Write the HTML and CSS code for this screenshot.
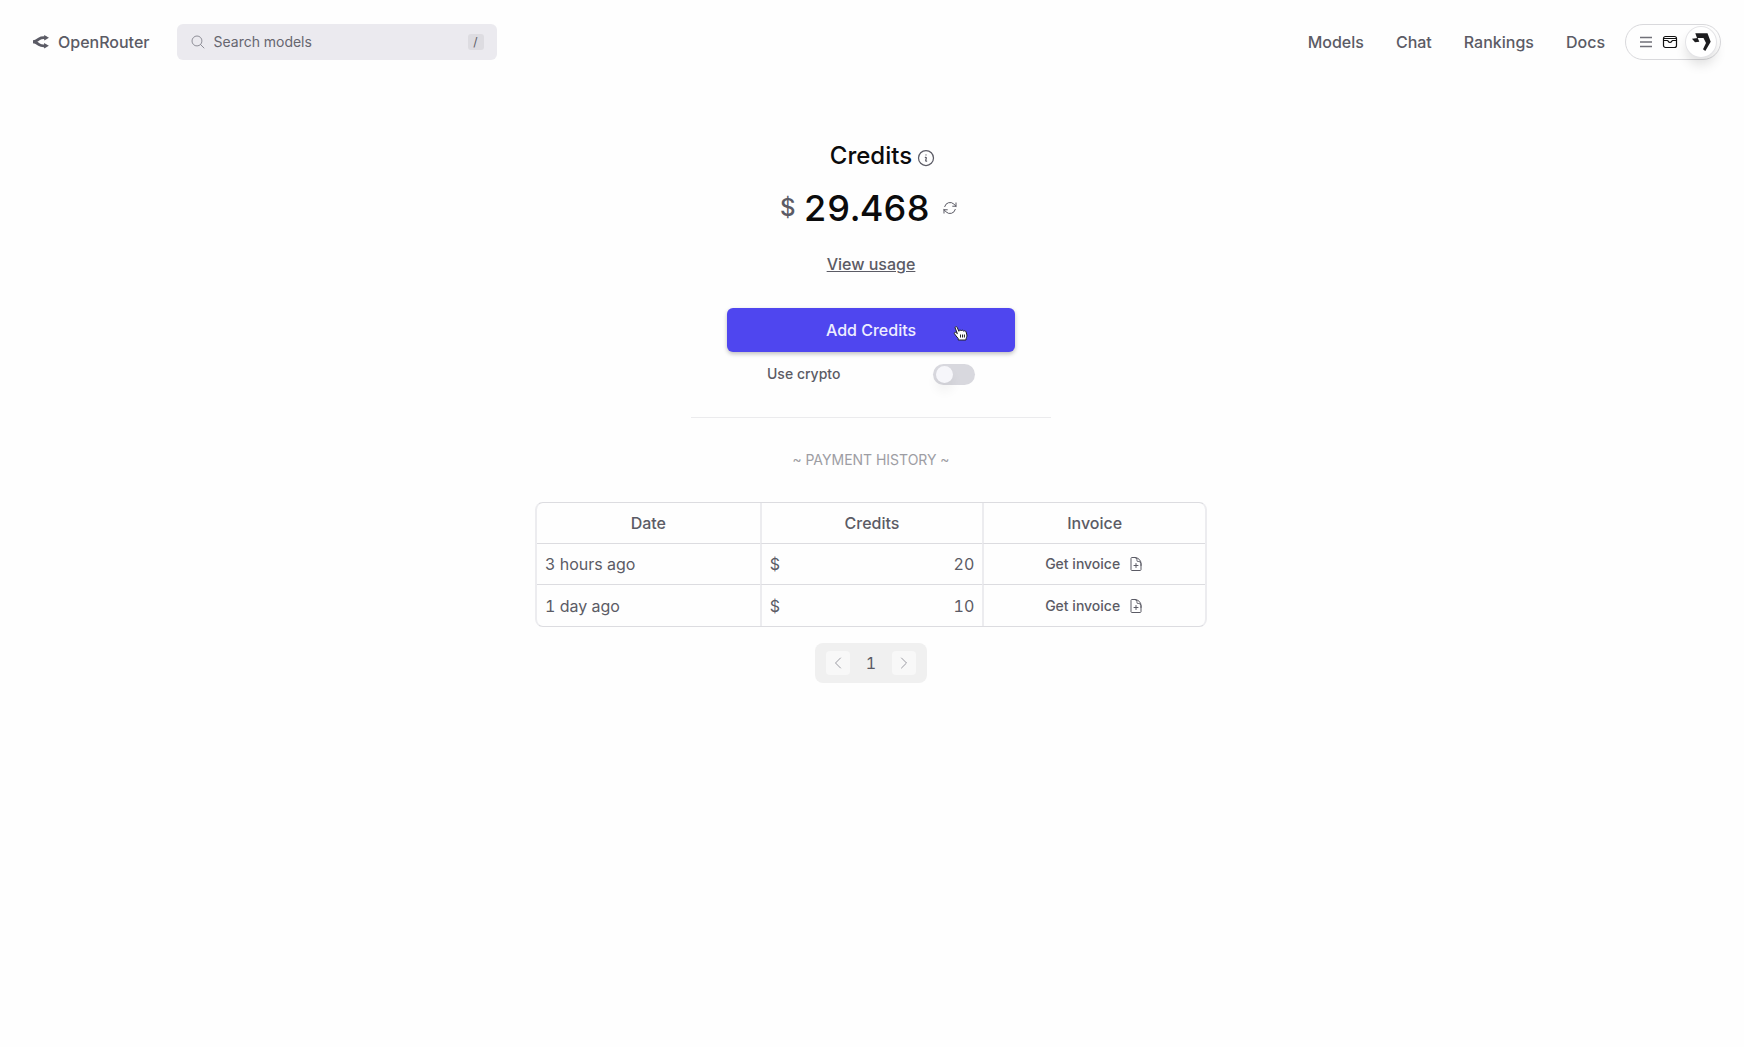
FILE: index.html
```html
<!DOCTYPE html>
<html lang="en">
<head>
<meta charset="utf-8">
<meta name="viewport" content="width=device-width, initial-scale=1">
<title>Credits | OpenRouter</title>
<link rel="stylesheet" href="styles.css">
</head>
<body>
<svg class="sprite" aria-hidden="true">
  <symbol id="doc-plus" viewBox="0 0 24 24"><path d="M19.5 14.25v-2.625a3.375 3.375 0 0 0-3.375-3.375h-1.5A1.125 1.125 0 0 1 13.5 7.125v-1.5a3.375 3.375 0 0 0-3.375-3.375H8.25m3.75 9v6m3-3H9m1.5-12H5.625c-.621 0-1.125.504-1.125 1.125v17.25c0 .621.504 1.125 1.125 1.125h12.75c.621 0 1.125-.504 1.125-1.125V11.25a9 9 0 0 0-9-9Z"/></symbol>
</svg>
<header class="topbar">
  <a class="brand" href="#">
    <svg class="brand-mark" viewBox="0 0 512 512" aria-hidden="true"><path class="line" d="M3 248.945C18 248.945 76 236 106 219C136 202 136 202 198 158C276.497 102.293 332 120.945 423 120.945"/><path d="M511 121.5L357.25 210.268V32.732Z"/><path class="line" d="M0 249C15 249 73 261.945 103 278.945C133 295.945 133 295.945 195 339.945C273.497 395.652 329 377 420 377"/><path d="M508 376.445L354.25 287.678V465.213Z"/></svg>
    OpenRouter
  </a>
  <div class="search">
    <svg class="icon" viewBox="0 0 24 24" aria-hidden="true"><path d="m21 21-5.197-5.197m0 0A7.5 7.5 0 1 0 5.196 5.196a7.5 7.5 0 0 0 10.607 10.607Z"/></svg>
    <input type="text" placeholder="Search models" aria-label="Search models">
    <kbd>/</kbd>
  </div>
  <nav class="nav">
    <a href="#">Models</a>
    <a href="#">Chat</a>
    <a href="#">Rankings</a>
    <a href="#">Docs</a>
  </nav>
  <button class="account" type="button" aria-label="Account menu">
    <svg class="menu-icon" viewBox="0 0 16 16" aria-hidden="true"><path d="M2 3.500h12M2 8h12M2 12.500h12"/></svg>
    <svg class="inbox-icon" viewBox="0 0 16 16" aria-hidden="true"><rect x="1.500" y="2.500" width="13" height="11" rx="2"/><path d="M1.500 4.500h13M1.500 6.500h4c.6 0 .8 2 2.500 2s1.900-2 2.500-2h4"/></svg>
    <span class="avatar"><svg viewBox="0 0 20 20" aria-hidden="true"><path d="M4.300 1.300H16.500L19.700 9.700 14.300 19 12 17.300 15 11 12.500 6H6Z"/><path d="M1 6.700 6.700 6 8.300 9.700 4 10.300Z"/></svg></span>
  </button>
</header>
<main class="page">
  <h1 class="title">Credits
    <svg class="icon" viewBox="0 0 24 24" aria-hidden="true"><path d="m11.250 11.250.041-.02a.75.75 0 0 1 1.063.852l-.708 2.836a.75.75 0 0 0 1.063.853l.041-.021M21 12a9 9 0 1 1-18 0 9 9 0 0 1 18 0Zm-9-3.750h.008v.008H12V8.250Z"/></svg>
  </h1>
  <div class="balance">
    <span class="currency">$</span>
    <span class="amount">29.468</span>
    <button class="refresh" type="button" aria-label="Refresh balance"><svg class="icon" viewBox="0 0 24 24" aria-hidden="true"><path d="M16.023 9.348h4.992v-.001M2.985 19.644v-4.992m0 0h4.992m-4.993 0 3.181 3.183a8.250 8.250 0 0 0 13.803-3.700M4.031 9.865a8.250 8.250 0 0 1 13.803-3.700l3.181 3.182m0-4.991v4.990"/></svg></button>
  </div>
  <a class="usage" href="#">View usage</a>
  <button class="add" type="button">Add Credits
    <svg class="pointer" viewBox="0 0 16 16" aria-hidden="true"><path d="M5.200 15V13.500C4 12 2.200 10 1.400 8.700.9 7.500 2.300 6.800 3.200 7.700L4.400 8.700 2.200 3C1.700 1.700 3.500 1 4.100 2.300L5.900 6.300C5.900 4.800 7.900 4.600 8.300 6 8.600 4.800 10.300 4.900 10.700 6.300 11.200 5.300 12.800 5.700 13.100 7L13.900 10C14.200 11.800 13 12.800 12.900 15Z"/><path d="M7.500 9.500v3M9.500 9.500v3M11.400 9.500v3"/></svg>
  </button>
  <div class="crypto">
    <label for="crypto">Use crypto</label>
    <input class="switch" id="crypto" type="checkbox" role="switch">
  </div>
  <hr class="rule">
  <h2 class="subtitle">~ PAYMENT HISTORY ~</h2>
  <table class="history">
    <thead>
      <tr><th>Date</th><th>Credits</th><th>Invoice</th></tr>
    </thead>
    <tbody>
      <tr><td>3 hours ago</td><td><div class="money"><span>$</span><span>20</span></div></td><td><button class="invoice" type="button">Get invoice <svg class="icon" aria-hidden="true"><use href="#doc-plus"/></svg></button></td></tr>
      <tr><td>1 day ago</td><td><div class="money"><span>$</span><span>10</span></div></td><td><button class="invoice" type="button">Get invoice <svg class="icon" aria-hidden="true"><use href="#doc-plus"/></svg></button></td></tr>
    </tbody>
  </table>
  <div class="pager">
    <button type="button" disabled aria-label="Previous page"><svg class="icon" viewBox="0 0 24 24" aria-hidden="true"><path d="M15.750 19.500 8.250 12l7.500-7.500"/></svg></button>
    <span>1</span>
    <button type="button" disabled aria-label="Next page"><svg class="icon" viewBox="0 0 24 24" aria-hidden="true"><path d="m8.250 4.500 7.500 7.500-7.500 7.500"/></svg></button>
  </div>
</main>
</body>
</html>
```
FILE: styles.css
```css
*, *::before, *::after { box-sizing: border-box; }

body {
  margin: 0;
  background: #fefefe;
  color: #5b5b65;
  font: 400 16px/24px Inter, "Liberation Sans", sans-serif;
  font-variant-numeric: tabular-nums;
}

button, input { font: inherit; color: inherit; }
button { border: 0; padding: 0; background: none; cursor: pointer; }
a { color: inherit; text-decoration: none; }

.sprite { position: absolute; width: 0; height: 0; }

.icon {
  flex: none;
  width: 16px;
  height: 16px;
  fill: none;
  stroke: currentColor;
  stroke-width: 1.5;
  stroke-linecap: round;
  stroke-linejoin: round;
}

/* Header */
.topbar {
  display: flex;
  align-items: center;
  padding: 24px 23px 24px 33px;
}

.brand {
  display: flex;
  align-items: center;
  gap: 9px;
  font-weight: 500;
}
.brand-mark { width: 16px; height: 16px; fill: currentColor; }
.brand-mark .line { fill: none; stroke: currentColor; stroke-width: 90; }

.search {
  display: flex;
  align-items: center;
  gap: 8px;
  width: 320px;
  height: 36px;
  margin-left: 27px;
  padding: 0 13px;
  border-radius: 6px;
  background: #ebeaef;
  font-size: 14px;
}
.search .icon { color: #8f8f98; }
.search input {
  flex: 1;
  min-width: 0;
  padding: 0;
  border: 0;
  outline: 0;
  background: none;
}
.search input::placeholder { color: #66666f; opacity: 1; }
.search kbd {
  width: 16px;
  height: 16px;
  border-radius: 3px;
  background: #dddce1;
  font: 400 12px/16px Inter, sans-serif;
  text-align: center;
}

.nav {
  display: flex;
  gap: 32px;
  margin-left: auto;
  font-weight: 500;
}

.account {
  display: flex;
  align-items: center;
  gap: 8px;
  height: 36px;
  margin-left: 20px;
  padding: 0 4px 0 12px;
  border: 1px solid #d9d9dc;
  border-radius: 18px;
}
.menu-icon, .inbox-icon { width: 16px; height: 16px; fill: none; stroke: #707078; stroke-width: 1.5; }
.inbox-icon { stroke: #111; stroke-width: 1.2; }
.avatar {
  display: grid;
  place-items: center;
  width: 30px;
  height: 30px;
  border-radius: 50%;
  background: #fff;
  box-shadow: 0 0 0 1px #e4e4e7, 0 8px 12px rgba(0, 0, 0, .12);
}
.avatar svg { width: 20px; height: 20px; fill: #1d1d1f; }

/* Credits */
.page {
  display: flex;
  flex-direction: column;
  align-items: center;
  padding: 56px 26px 56px 24px;
}

.title {
  display: flex;
  align-items: center;
  gap: 4px;
  margin: 0 0 0 24px;
  color: #0b0b0c;
  font-size: 24px;
  font-weight: 500;
  line-height: 32px;
}
.title .icon { width: 20px; height: 20px; margin-top: 3px; color: #5b5b65; }

.balance {
  display: flex;
  align-items: center;
  gap: 8px;
  margin-top: 16px;
}
.currency { font-size: 24px; font-weight: 500; }
.amount { color: #0b0b0c; font-size: 36px; font-weight: 500; line-height: 40px; }
.refresh { display: flex; padding: 4px; }

.usage {
  margin-top: 24px;
  font-weight: 500;
  text-decoration: underline;
}

.add {
  position: relative;
  width: 288px;
  height: 44px;
  margin-top: 32px;
  border-radius: 6px;
  background: #4f46ef;
  box-shadow: 0 2px 4px rgba(0, 0, 0, .25);
  color: #eeeeff;
  font-weight: 500;
}
.pointer {
  position: absolute;
  top: 17px;
  right: 46px;
  width: 16px;
  height: 16px;
  fill: #fff;
  stroke: #222;
}

.crypto {
  display: flex;
  align-items: center;
  justify-content: space-between;
  width: 208px;
  margin-top: 10px;
  font-size: 14px;
  font-weight: 500;
}
.switch {
  appearance: none;
  display: flex;
  width: 42px;
  height: 21px;
  margin: 0;
  padding: 2px 3px;
  border-radius: 11px;
  background: #d8d8de;
}
.switch::before {
  content: "";
  width: 17px;
  height: 17px;
  border-radius: 50%;
  background: #f6f6fa;
  box-shadow: 0 8px 12px rgba(0, 0, 0, .06);
}

.rule {
  width: 360px;
  margin: 31px 0 0;
  border: 0;
  border-top: 1px solid #ebebed;
}
.subtitle {
  margin: 30px 0;
  color: #9d9da3;
  font-size: 14px;
  font-weight: 400;
  line-height: 24px;
}

/* Payment history */
.history {
  width: 100%;
  max-width: 672px;
  table-layout: fixed;
  border: solid;
  border-width: 1px 2px;
  border-color: #dcdce0 #ececef;
  border-radius: 8px;
  border-spacing: 0;
}
.history th, .history td {
  height: 41px;
  padding: 0 8px;
  border-bottom: 1px solid #dcdce0;
}
.history th + th, .history td + td { border-left: 2px solid #ececef; }
.history tr:last-child td { border-bottom: 0; }
.history th { font-weight: 500; }
.money { display: flex; justify-content: space-between; }
.invoice {
  display: flex;
  align-items: center;
  gap: 8px;
  margin: 0 auto;
  font-size: 14px;
  font-weight: 500;
}

.pager {
  display: flex;
  align-items: center;
  height: 40px;
  margin-top: 16px;
  padding: 0 11px;
  border-radius: 8px;
  background: #f0f0f0;
}
.pager span { width: 42px; text-align: center; }
.pager button {
  display: grid;
  place-items: center;
  width: 24px;
  height: 24px;
  border-radius: 4px;
  background: #f8f8f8;
  color: #9a9aa2;
}
```
